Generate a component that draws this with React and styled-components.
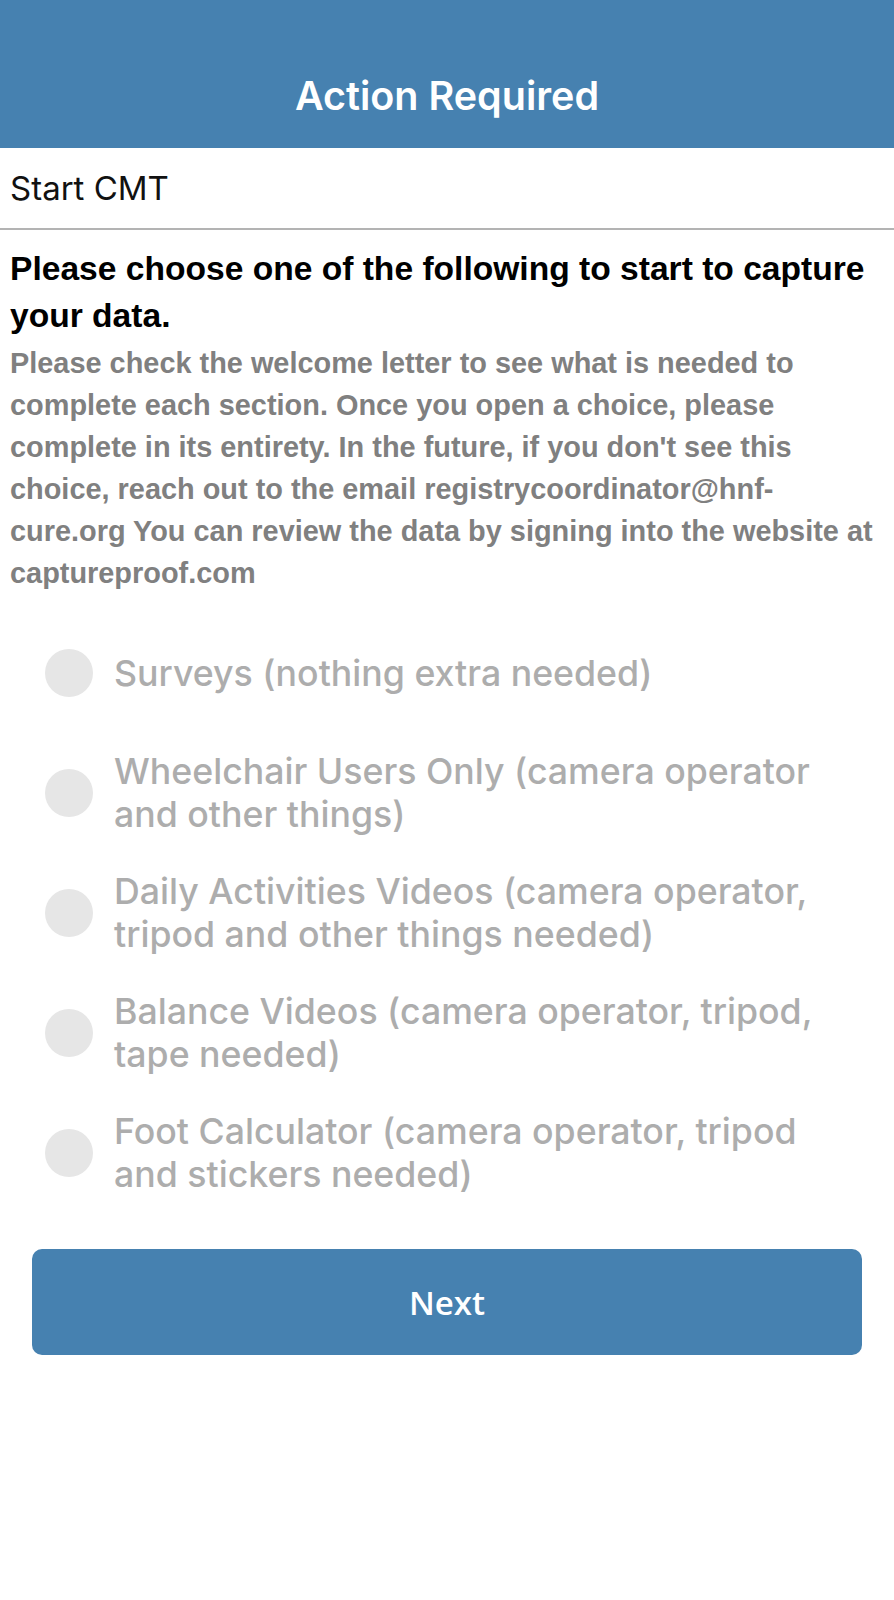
import React, { useState } from 'react';
import styled, { createGlobalStyle } from 'styled-components';

const GlobalStyle = createGlobalStyle`
  html, body {
    margin: 0;
    padding: 0;
    background: #ffffff;
  }
  * {
    box-sizing: border-box;
  }
`;

const Screen = styled.div`
  width: 894px;
  min-height: 1600px;
  display: flex;
  flex-direction: column;
  background: #ffffff;
`;

const Header = styled.header`
  height: 148px;
  background: #4681b0;
  display: flex;
  align-items: flex-end;
  justify-content: center;
  padding-bottom: 30px;
`;

const Title = styled.h1`
  margin: 0;
  color: #ffffff;
  font-family: Inter, 'Open Sans', sans-serif;
  font-weight: 600;
  font-size: 39.5px;
  line-height: 44px;
`;

const TaskRow = styled.div`
  height: 82px;
  display: flex;
  align-items: center;
  padding: 0 10px;
  border-bottom: 2.5px solid #b3b3b3;
  font-family: Inter, 'Liberation Sans', sans-serif;
  font-size: 33px;
  color: #111111;
`;

const Body = styled.div`
  padding: 15px 10px 0 10px;
  display: flex;
  flex-direction: column;
`;

const Heading = styled.h2`
  margin: 0;
  font-family: 'Liberation Sans', Arial, sans-serif;
  font-weight: 700;
  font-size: 33.6px;
  line-height: 47px;
  color: #000000;
`;

const Note = styled.p`
  margin: 3px 0 0 0;
  font-family: 'Liberation Sans', Arial, sans-serif;
  font-weight: 700;
  font-size: 28.9px;
  line-height: 42px;
  color: #808080;
`;

const Options = styled.div`
  margin-top: 19px;
  display: flex;
  flex-direction: column;
`;

const Option = styled.label`
  height: 120px;
  display: flex;
  align-items: center;
  gap: 21px;
  padding: 0 44px 0 45px;
  cursor: pointer;
`;

const Radio = styled.span`
  flex: 0 0 48px;
  width: 48px;
  height: 48px;
  border-radius: 50%;
  background: ${p => (p.$checked ? '#4681b0' : '#e6e6e6')};
`;

const OptionText = styled.span`
  font-family: Inter, 'Open Sans', sans-serif;
  font-weight: 500;
  font-size: 35.7px;
  line-height: 43px;
  color: #adadad;
`;

const NextButton = styled.button`
  margin: 36px 32px 0 32px;
  height: 106px;
  border: none;
  border-radius: 10px;
  background: #4681b0;
  color: #ffffff;
  font-family: 'Open Sans', sans-serif;
  font-weight: 600;
  font-size: 33px;
  cursor: pointer;
`;

const choices = [
  'Surveys (nothing extra needed)',
  'Wheelchair Users Only (camera operator and other things)',
  'Daily Activities Videos (camera operator, tripod and other things needed)',
  'Balance Videos (camera operator, tripod, tape needed)',
  'Foot Calculator (camera operator, tripod and stickers needed)',
];

export default function App() {
  const [selected, setSelected] = useState(null);

  return (
    <Screen>
      <GlobalStyle />
      <Header>
        <Title>Action Required</Title>
      </Header>
      <TaskRow>Start CMT</TaskRow>
      <Body>
        <Heading>Please choose one of the following to start to capture your data.</Heading>
        <Note>
          Please check the welcome letter to see what is needed to complete each section. Once you
          open a choice, please complete in its entirety. In the future, if you don't see this
          choice, reach out to the email registrycoordinator@hnf-cure.org You can review the data by
          signing into the website at captureproof.com
        </Note>
      </Body>
      <Options>
        {choices.map((c, i) => (
          <Option key={i} onClick={() => setSelected(i)}>
            <Radio $checked={selected === i} />
            <OptionText>{c}</OptionText>
          </Option>
        ))}
      </Options>
      <NextButton>Next</NextButton>
    </Screen>
  );
}
